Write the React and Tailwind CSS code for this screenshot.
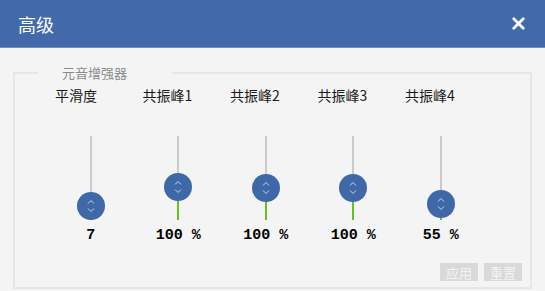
import { X } from "lucide-react";

const bands = [
  { label: "平滑度", value: "7", pos: 70 },
  { label: "共振峰1", value: "100 %", pos: 51 },
  { label: "共振峰2", value: "100 %", pos: 52 },
  { label: "共振峰3", value: "100 %", pos: 52 },
  { label: "共振峰4", value: "55 %", pos: 68 },
];

// vertical slider, track is 84px tall, pos = thumb centre from top
function VSlider({ pos }) {
  return (
    <div className="relative h-[84px] w-[28px]">
      <div className="absolute left-[13px] top-0 h-full w-[2px] bg-[#cbcbcb]" />
      <div
        className="absolute left-[13px] bottom-0 w-[2px] bg-[#66c21f]"
        style={{ height: Math.max(0, 84 - pos - 13) }}
      />
      <div
        className="absolute left-0 flex h-[28px] w-[28px] items-center justify-center rounded-full bg-[#3f68a9]"
        style={{ top: pos - 14 }}
      >
        <svg width="12" height="18" viewBox="0 0 12 18" fill="none" stroke="#c9d6ea" strokeWidth="1">
          <path d="M3 6.5 L6 3.5 L9 6.5" />
          <path d="M3 11.5 L6 14.5 L9 11.5" />
        </svg>
      </div>
    </div>
  );
}

export default function App() {
  return (
    <div className="w-[545px] h-[291px] bg-[#f4f4f4] flex flex-col overflow-hidden" style={{ fontFamily: '"Noto Sans CJK SC", "Noto Sans", sans-serif' }}>

      {/* HEADER */}
      <div className="h-[48px] shrink-0 bg-[#426aab] border-b border-[#6d8dc0] flex items-center justify-between pl-[18px] pr-[17px]">
        <h1 className="text-[18px] text-white leading-none">高级</h1>
        <X size={19} strokeWidth={3.5} color="#ffffff" />
      </div>

      {/* BODY */}
      <div className="flex-1 pl-[13px] pr-[13px] pt-[17px]">
        <fieldset className="h-[224px] border-2 border-[#e6e6e6] p-0">
          <legend className="ml-[23px] w-[134px] pl-[24px] text-[13px] leading-[16px] text-[#8a8a8a]">元音增强器</legend>

          <div className="grid grid-cols-[repeat(5,87.5px)] ml-[32px] mt-[4px]">
            {bands.map((b) => (
              <div key={b.label} className="flex flex-col">
                <div className="pl-[8px] text-[14px] leading-[20px] text-[#1a1a1a]">{b.label}</div>
                <div className="mt-[31px] flex justify-center">
                  <VSlider pos={b.pos} />
                </div>
                <div
                  className="mt-[7px] text-center font-bold text-[15px] leading-[18px] text-black"
                  style={{ fontFamily: '"Liberation Mono", monospace' }}
                >
                  {b.value}
                </div>
              </div>
            ))}
          </div>

          <div className="flex justify-end gap-[6px] pr-[8px] mt-[18px]">
            <button className="w-[38px] h-[18px] bg-[#d9d9d9] text-[#f3f3f3] text-[13px] leading-none">应用</button>
            <button className="w-[38px] h-[18px] bg-[#d9d9d9] text-[#f3f3f3] text-[13px] leading-none">重置</button>
          </div>
        </fieldset>
      </div>

    </div>
  );
}
